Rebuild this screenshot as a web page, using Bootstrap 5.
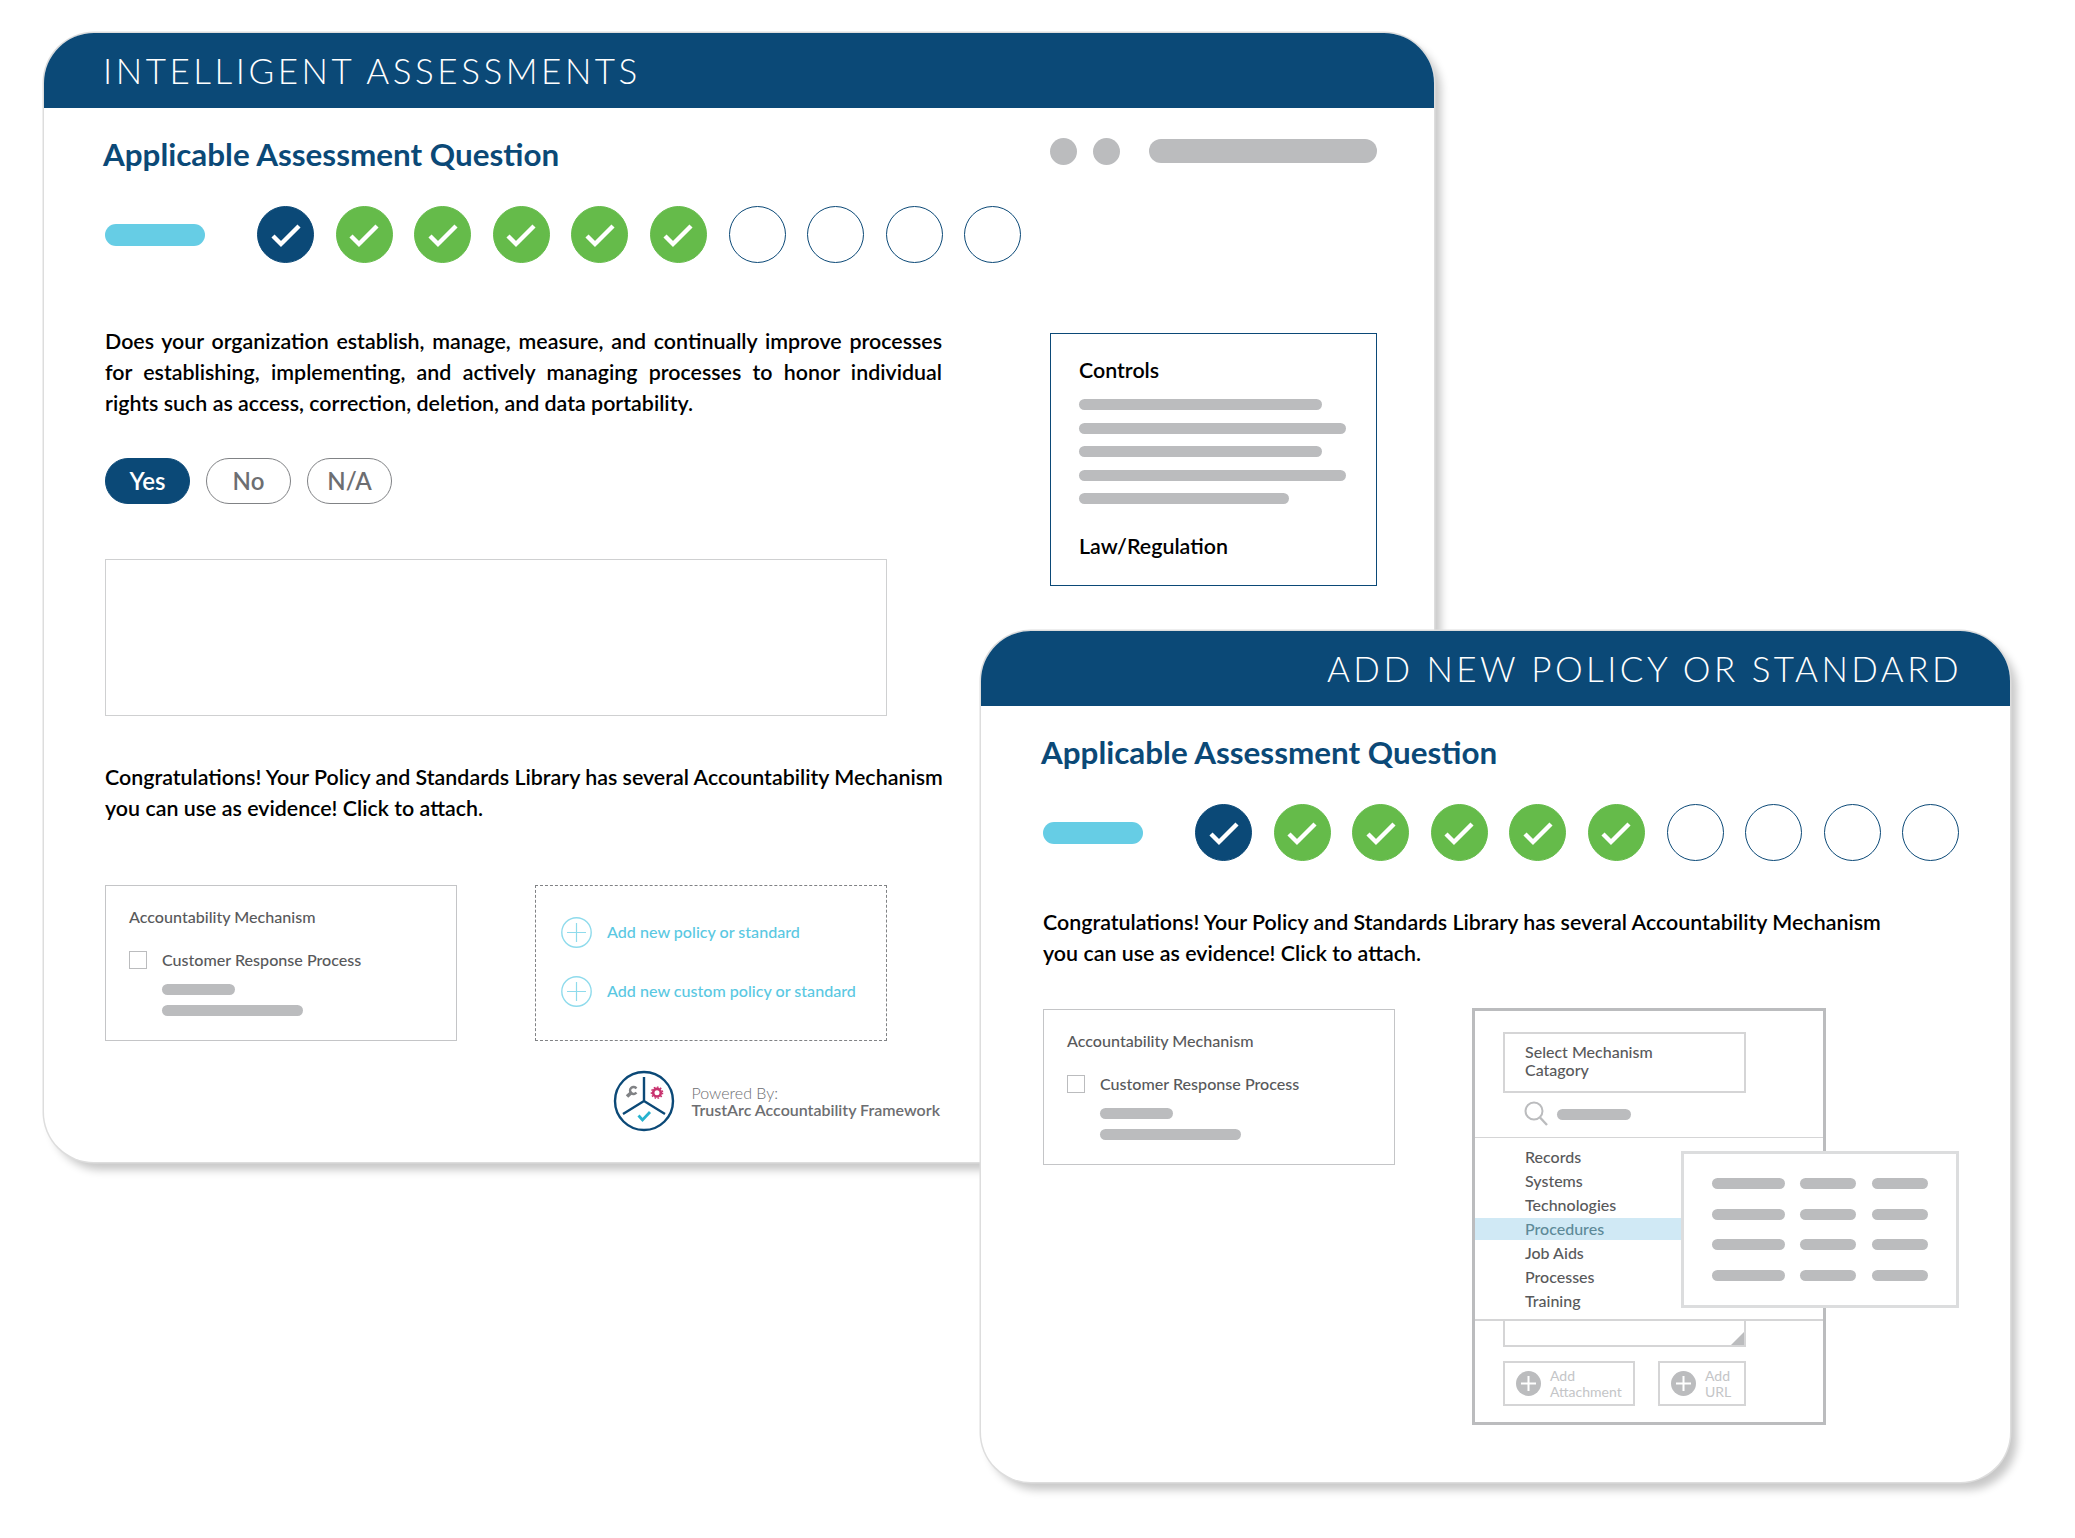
<!DOCTYPE html>
<html lang="en">
<head>
  <meta charset="UTF-8" />
  <meta name="viewport" content="width=device-width, initial-scale=1" />
  <title>Intelligent Assessments</title>
  <link href="https://cdn.jsdelivr.net/npm/bootstrap@5.3.2/dist/css/bootstrap.min.css" rel="stylesheet" />
  <style>
    body {
      background-color: #fff;
      font-family: "Lato", "Liberation Sans", sans-serif;
      color: #000;
    }

    .stage {
      position: relative;
      width: 2075px;
      height: 1538px;
      overflow: hidden;
    }

    /* the two app windows sit on a free canvas */
    .win {
      position: absolute;
      border: 0;
      border-radius: 50px;
      background: #fff;
      box-shadow: 0 0 0 1.5px #ddd, 7px 8px 9px rgba(0, 0, 0, .22);
    }

    .win-back { left: 44px; top: 33px; width: 1390px; height: 1129px; }
    .win-front { left: 981px; top: 631px; width: 1029px; height: 851px; }

    .win-head {
      height: 75px;
      background: #0b4977;
      border: 0;
      border-radius: 50px 50px 0 0 !important;
      color: #fff;
      font-weight: 300;
      font-size: 35px;
      line-height: 75px;
      letter-spacing: 3.55px;
      padding: 0 59px;
    }

    .win-front .win-head { text-align: right; padding: 0 48px; letter-spacing: 3.45px; }

    .win-body { padding: 26px 57px 0 61px; }
    .win-front .win-body { padding: 26px 50px 0 62px; }

    .q-title {
      color: #0b4977;
      font-size: 31.4px;
      font-weight: 700;
      line-height: 40px;
      margin: 0 0 0 -2px;
    }

    .grey-dot { width: 27px; height: 27px; border-radius: 50%; background: #bbbcbe; }
    .grey-bar { height: 11px; border-radius: 6px; background: #bbbcbe; }
    .top-tools { margin-bottom: 6px; }
    .top-bar { width: 228px; height: 24px; border-radius: 12px; margin-left: 29px; }

    .progress-row { margin-top: 32px; }
    .cyan-bar { width: 100px; height: 22px; border-radius: 11px; background: #66cde5; margin-right: 52px; }
    .step-dots { gap: 21.6px; }
    .step { width: 57px; height: 57px; border-radius: 50%; border: 1.5px solid #0b4977; }
    .step svg { width: 34px; height: 26px; }
    .step-now { background: #0b4977; }
    .step-done { background: #65bb4a; border-color: #65bb4a; }

    .q-text { font-size: 21.4px; font-weight: 600; line-height: 31px; margin: 0; }
    .q-justify { text-align: justify; text-align-last: justify; }
    .q-justify-end { text-align-last: left; }

    .q-main { width: 837px; margin-top: 63px; }
    .pill-row { gap: 16px; margin-top: 39px; }
    .pill {
      width: 85px;
      height: 46px;
      padding: 0;
      font-size: 24px;
      font-weight: 600;
      line-height: 42px;
      color: #6d6e71;
      background: #fff;
      border: 1.5px solid #808285;
    }
    .pill-on { color: #fff; background: #0b4977; border-color: #0b4977; }
    .answer-box { width: 782px; height: 157px; margin-top: 55px; border: 1.5px solid #cfd0d1; }
    .mt-congrats { margin-top: 46px; }

    .controls-box {
      width: 327px;
      height: 253px;
      margin: 70px 0 0 108px;
      padding: 24px 28px;
      border: 1.5px solid #0b4977;
      font-size: 21.4px;
      font-weight: 600;
      line-height: 24px;
    }
    .controls-bars { gap: 12.5px; margin: 17px 0 30px; }

    .mech-box {
      width: 352px;
      height: 156px;
      padding: 20px 23px;
      border: 1.5px solid #c4c5c7;
      color: #58595b;
      font-size: 16.1px;
      font-weight: 500;
      line-height: 22px;
    }
    .mech-row { margin-top: 21px; }
    .fake-check { width: 18px; height: 18px; border: 1.5px solid #bbbcbe; margin-right: 15px; }
    .mech-lines { margin: 13px 0 0 33px; gap: 10px; }

    .boxes-row { margin-top: 61px; gap: 78px; }
    .add-box {
      width: 352px;
      height: 156px;
      padding: 31px 25px 0;
      border: 1px dashed #808285;
      color: #5ac8e2;
      font-size: 16.1px;
      font-weight: 500;
      gap: 28px;
    }
    .add-line { gap: 15px; height: 31px; }

    .powered { margin: 29px 2px 0 0; gap: 17px; color: #6d6e71; font-size: 16px; line-height: 17px; }
    .powered b { font-weight: 600; }
    .powered span { font-weight: 300; }

    .front-boxes { margin-top: 39px; gap: 77px; }
    .front-boxes .mech-box { margin-top: 1px; }
    .mech-panel { position: relative; width: 354px; height: 417px; border: 3px solid #bbbcbe; }
    .panel-top { padding: 21px 0 10px 28px; border-bottom: 1.5px solid #d5d5d6; color: #58595b; }
    .select-box {
      width: 243px;
      height: 61px;
      padding: 9px 20px;
      border: 2px solid #d5d5d6;
      font-size: 16px;
      font-weight: 500;
      line-height: 18px;
    }
    .panel-search { height: 26px; margin: 8px 0 0 21px; gap: 9px; }
    .panel-list { padding: 7px 0 6px; border-bottom: 2px solid #d5d5d6; font-size: 16px; font-weight: 500; color: #58595b; }
    .panel-list li { height: 24px; padding-left: 50px; line-height: 24px; }
    .panel-list .picked { color: #5d8a98; background: linear-gradient(#fff 1px, #d0e9f5 1px, #d0e9f5 23px, #fff 23px); }
    .note-stub { position: relative; width: 243px; height: 26px; margin-left: 28px; border: 2px solid #d5d5d6; border-top: 0; }
    .note-stub::after {
      content: "";
      position: absolute;
      right: 0;
      bottom: 0;
      border-style: solid;
      border-width: 0 0 13px 13px;
      border-color: transparent transparent #bbbcbe transparent;
    }
    .panel-btns { margin: 14px 0 0 28px; gap: 23px; }
    .add-btn {
      height: 45px;
      padding: 0 0 0 11px;
      gap: 9px;
      border: 2px solid #d5d5d6;
      color: #c4c5c7;
      font-size: 14px;
      line-height: 16px;
    }
    .add-wide { width: 132px; }
    .add-narrow { width: 88px; }

    /* floats over the panel edge */
    .sub-menu {
      position: absolute;
      left: 206px;
      top: 140px;
      width: 278px;
      height: 157px;
      padding: 24px 24px 24px 28px;
      gap: 19.5px;
      background: #fff;
      border: 3px solid #dcddde;
    }
    .bar-a { width: 73px; }
    .bar-b { width: 56px; margin-left: 15px; }
    .bar-c { width: 56px; margin-left: 16px; }
  </style>
</head>
<body class="m-0">

  <svg class="d-none" xmlns="http://www.w3.org/2000/svg">
    <symbol id="tick" viewBox="0 0 34 26">
      <path d="M4 14 L12 22 L30 4" fill="none" stroke="#fff" stroke-width="4.4" />
    </symbol>
    <symbol id="plus-ring" viewBox="0 0 31 31">
      <circle cx="15.5" cy="15.5" r="14.7" fill="none" stroke="#8fdbec" stroke-width="1.4" />
      <path d="M15.5 6V25M6 15.5H25" fill="none" stroke="#8fdbec" stroke-width="1.2" />
    </symbol>
    <symbol id="plus-solid" viewBox="0 0 25 25">
      <circle cx="12.5" cy="12.5" r="12.5" fill="#bbbcbe" />
      <path d="M12.5 5V20M5 12.5H20" fill="none" stroke="#fff" stroke-width="2" />
    </symbol>
  </svg>

  <div class="stage">

    <!-- back window -->
    <div class="card win win-back">
      <div class="card-header win-head">INTELLIGENT ASSESSMENTS</div>
      <div class="win-body">
        <div class="d-flex align-items-center">
          <h2 class="q-title flex-grow-1">Applicable Assessment Question</h2>
          <div class="d-flex align-items-center top-tools">
            <div class="grey-dot"></div>
            <div class="grey-dot ms-3"></div>
            <div class="grey-bar top-bar"></div>
          </div>
        </div>

        <div class="d-flex align-items-center progress-row">
          <div class="cyan-bar"></div>
          <div class="d-flex step-dots">
            <div class="step step-now d-flex align-items-center justify-content-center"><svg><use href="#tick" /></svg></div>
            <div class="step step-done d-flex align-items-center justify-content-center"><svg><use href="#tick" /></svg></div>
            <div class="step step-done d-flex align-items-center justify-content-center"><svg><use href="#tick" /></svg></div>
            <div class="step step-done d-flex align-items-center justify-content-center"><svg><use href="#tick" /></svg></div>
            <div class="step step-done d-flex align-items-center justify-content-center"><svg><use href="#tick" /></svg></div>
            <div class="step step-done d-flex align-items-center justify-content-center"><svg><use href="#tick" /></svg></div>
            <div class="step"></div>
            <div class="step"></div>
            <div class="step"></div>
            <div class="step"></div>
          </div>
        </div>

        <div class="d-flex align-items-start">
          <div class="q-main flex-shrink-0">
            <p class="q-text q-justify">Does your organization establish, manage, measure, and continually improve processes for establishing, implementing, and actively managing processes to honor individual <span class="d-block q-justify-end">rights such as access, correction, deletion, and data portability.</span></p>

            <div class="d-flex pill-row">
              <button type="button" class="btn rounded-pill pill pill-on">Yes</button>
              <button type="button" class="btn rounded-pill pill">No</button>
              <button type="button" class="btn rounded-pill pill">N/A</button>
            </div>

            <div class="answer-box"></div>

            <p class="q-text mt-congrats text-nowrap">Congratulations! Your Policy and Standards Library has several Accountability Mechanism<br>you can use as evidence! Click to attach.</p>

            <div class="d-flex boxes-row">
              <div class="mech-box">
                <div>Accountability Mechanism</div>
                <div class="d-flex align-items-center mech-row">
                  <div class="fake-check"></div>
                  <div>Customer Response Process</div>
                </div>
                <div class="d-flex flex-column mech-lines">
                  <div class="grey-bar bar-a"></div>
                  <div class="grey-bar" style="width: 141px"></div>
                </div>
              </div>
              <div class="add-box d-flex flex-column">
                <div class="d-flex align-items-center add-line">
                  <svg width="31" height="31"><use href="#plus-ring" /></svg>
                  <span>Add new policy or standard</span>
                </div>
                <div class="d-flex align-items-center add-line">
                  <svg width="31" height="31"><use href="#plus-ring" /></svg>
                  <span>Add new custom policy or standard</span>
                </div>
              </div>
            </div>

            <div class="d-flex justify-content-end align-items-center powered">
              <svg width="62" height="62" viewBox="-31 -31 62 62" xmlns="http://www.w3.org/2000/svg">
                <circle r="29" fill="#fff" stroke="#0b4977" stroke-width="2.4" />
                <path d="M0 0V-24M0 0L-21 13M0 0L21 13" fill="none" stroke="#0b4977" stroke-width="2.4" />
                <path d="M-17 -4.500L-12 -9" fill="none" stroke="#808285" stroke-width="3.600" />
                <path d="M-7.600 -12.500A3.500 3.500 0 1 0 -7.600 -8.500" fill="none" stroke="#808285" stroke-width="2.400" />
                <circle cx="13" cy="-8.300" r="3.800" fill="none" stroke="#c8326e" stroke-width="2.600" />
                <circle cx="13" cy="-8.300" r="5.600" fill="none" stroke="#c8326e" stroke-width="1.400" stroke-dasharray="1.600 1.600" />
                <path d="M-5.500 14.500L-1.500 19L6 11" fill="none" stroke="#27b3cf" stroke-width="2.800" />
              </svg>
              <div>
                <span>Powered By:</span><br>
                <b>TrustArc Accountability Framework</b>
              </div>
            </div>
          </div>

          <div class="controls-box">
            <div>Controls</div>
            <div class="d-flex flex-column controls-bars">
              <div class="grey-bar" style="width: 243px"></div>
              <div class="grey-bar" style="width: 267px"></div>
              <div class="grey-bar" style="width: 243px"></div>
              <div class="grey-bar" style="width: 267px"></div>
              <div class="grey-bar" style="width: 210px"></div>
            </div>
            <div>Law/Regulation</div>
          </div>
        </div>
      </div>
    </div>

    <!-- front window -->
    <div class="card win win-front">
      <div class="card-header win-head">ADD NEW POLICY OR STANDARD</div>
      <div class="win-body">
        <h2 class="q-title">Applicable Assessment Question</h2>

        <div class="d-flex align-items-center progress-row">
          <div class="cyan-bar"></div>
          <div class="d-flex step-dots">
            <div class="step step-now d-flex align-items-center justify-content-center"><svg><use href="#tick" /></svg></div>
            <div class="step step-done d-flex align-items-center justify-content-center"><svg><use href="#tick" /></svg></div>
            <div class="step step-done d-flex align-items-center justify-content-center"><svg><use href="#tick" /></svg></div>
            <div class="step step-done d-flex align-items-center justify-content-center"><svg><use href="#tick" /></svg></div>
            <div class="step step-done d-flex align-items-center justify-content-center"><svg><use href="#tick" /></svg></div>
            <div class="step step-done d-flex align-items-center justify-content-center"><svg><use href="#tick" /></svg></div>
            <div class="step"></div>
            <div class="step"></div>
            <div class="step"></div>
            <div class="step"></div>
          </div>
        </div>

        <p class="q-text mt-congrats text-nowrap">Congratulations! Your Policy and Standards Library has several Accountability Mechanism<br>you can use as evidence! Click to attach.</p>

        <div class="d-flex align-items-start front-boxes">
          <div class="mech-box flex-shrink-0">
            <div>Accountability Mechanism</div>
            <div class="d-flex align-items-center mech-row">
              <div class="fake-check"></div>
              <div>Customer Response Process</div>
            </div>
            <div class="d-flex flex-column mech-lines">
              <div class="grey-bar bar-a"></div>
              <div class="grey-bar" style="width: 141px"></div>
            </div>
          </div>

          <div class="mech-panel flex-shrink-0">
            <div class="panel-top">
              <div class="select-box">Select Mechanism<br>Catagory</div>
              <div class="d-flex align-items-center panel-search">
                <svg width="24" height="26" viewBox="0 0 24 26" xmlns="http://www.w3.org/2000/svg">
                  <circle cx="10" cy="10" r="8.500" fill="none" stroke="#bbbcbe" stroke-width="2" />
                  <path d="M16 16.500L23 24" fill="none" stroke="#bbbcbe" stroke-width="2.400" />
                </svg>
                <div class="grey-bar" style="width: 74px"></div>
              </div>
            </div>
            <ul class="list-unstyled m-0 panel-list">
              <li>Records</li>
              <li>Systems</li>
              <li>Technologies</li>
              <li class="picked">Procedures</li>
              <li>Job Aids</li>
              <li>Processes</li>
              <li>Training</li>
            </ul>
            <div class="note-stub"></div>
            <div class="d-flex panel-btns">
              <div class="d-flex align-items-center add-btn add-wide">
                <svg width="25" height="25" class="flex-shrink-0"><use href="#plus-solid" /></svg>
                <div>Add<br>Attachment</div>
              </div>
              <div class="d-flex align-items-center add-btn add-narrow">
                <svg width="25" height="25" class="flex-shrink-0"><use href="#plus-solid" /></svg>
                <div>Add<br>URL</div>
              </div>
            </div>

            <div class="sub-menu d-flex flex-column">
              <div class="d-flex"><div class="grey-bar bar-a"></div><div class="grey-bar bar-b"></div><div class="grey-bar bar-c"></div></div>
              <div class="d-flex"><div class="grey-bar bar-a"></div><div class="grey-bar bar-b"></div><div class="grey-bar bar-c"></div></div>
              <div class="d-flex"><div class="grey-bar bar-a"></div><div class="grey-bar bar-b"></div><div class="grey-bar bar-c"></div></div>
              <div class="d-flex"><div class="grey-bar bar-a"></div><div class="grey-bar bar-b"></div><div class="grey-bar bar-c"></div></div>
            </div>
          </div>
        </div>
      </div>
    </div>

  </div>

  <script src="https://cdn.jsdelivr.net/npm/bootstrap@5.3.2/dist/js/bootstrap.bundle.min.js"></script>
</body>
</html>
